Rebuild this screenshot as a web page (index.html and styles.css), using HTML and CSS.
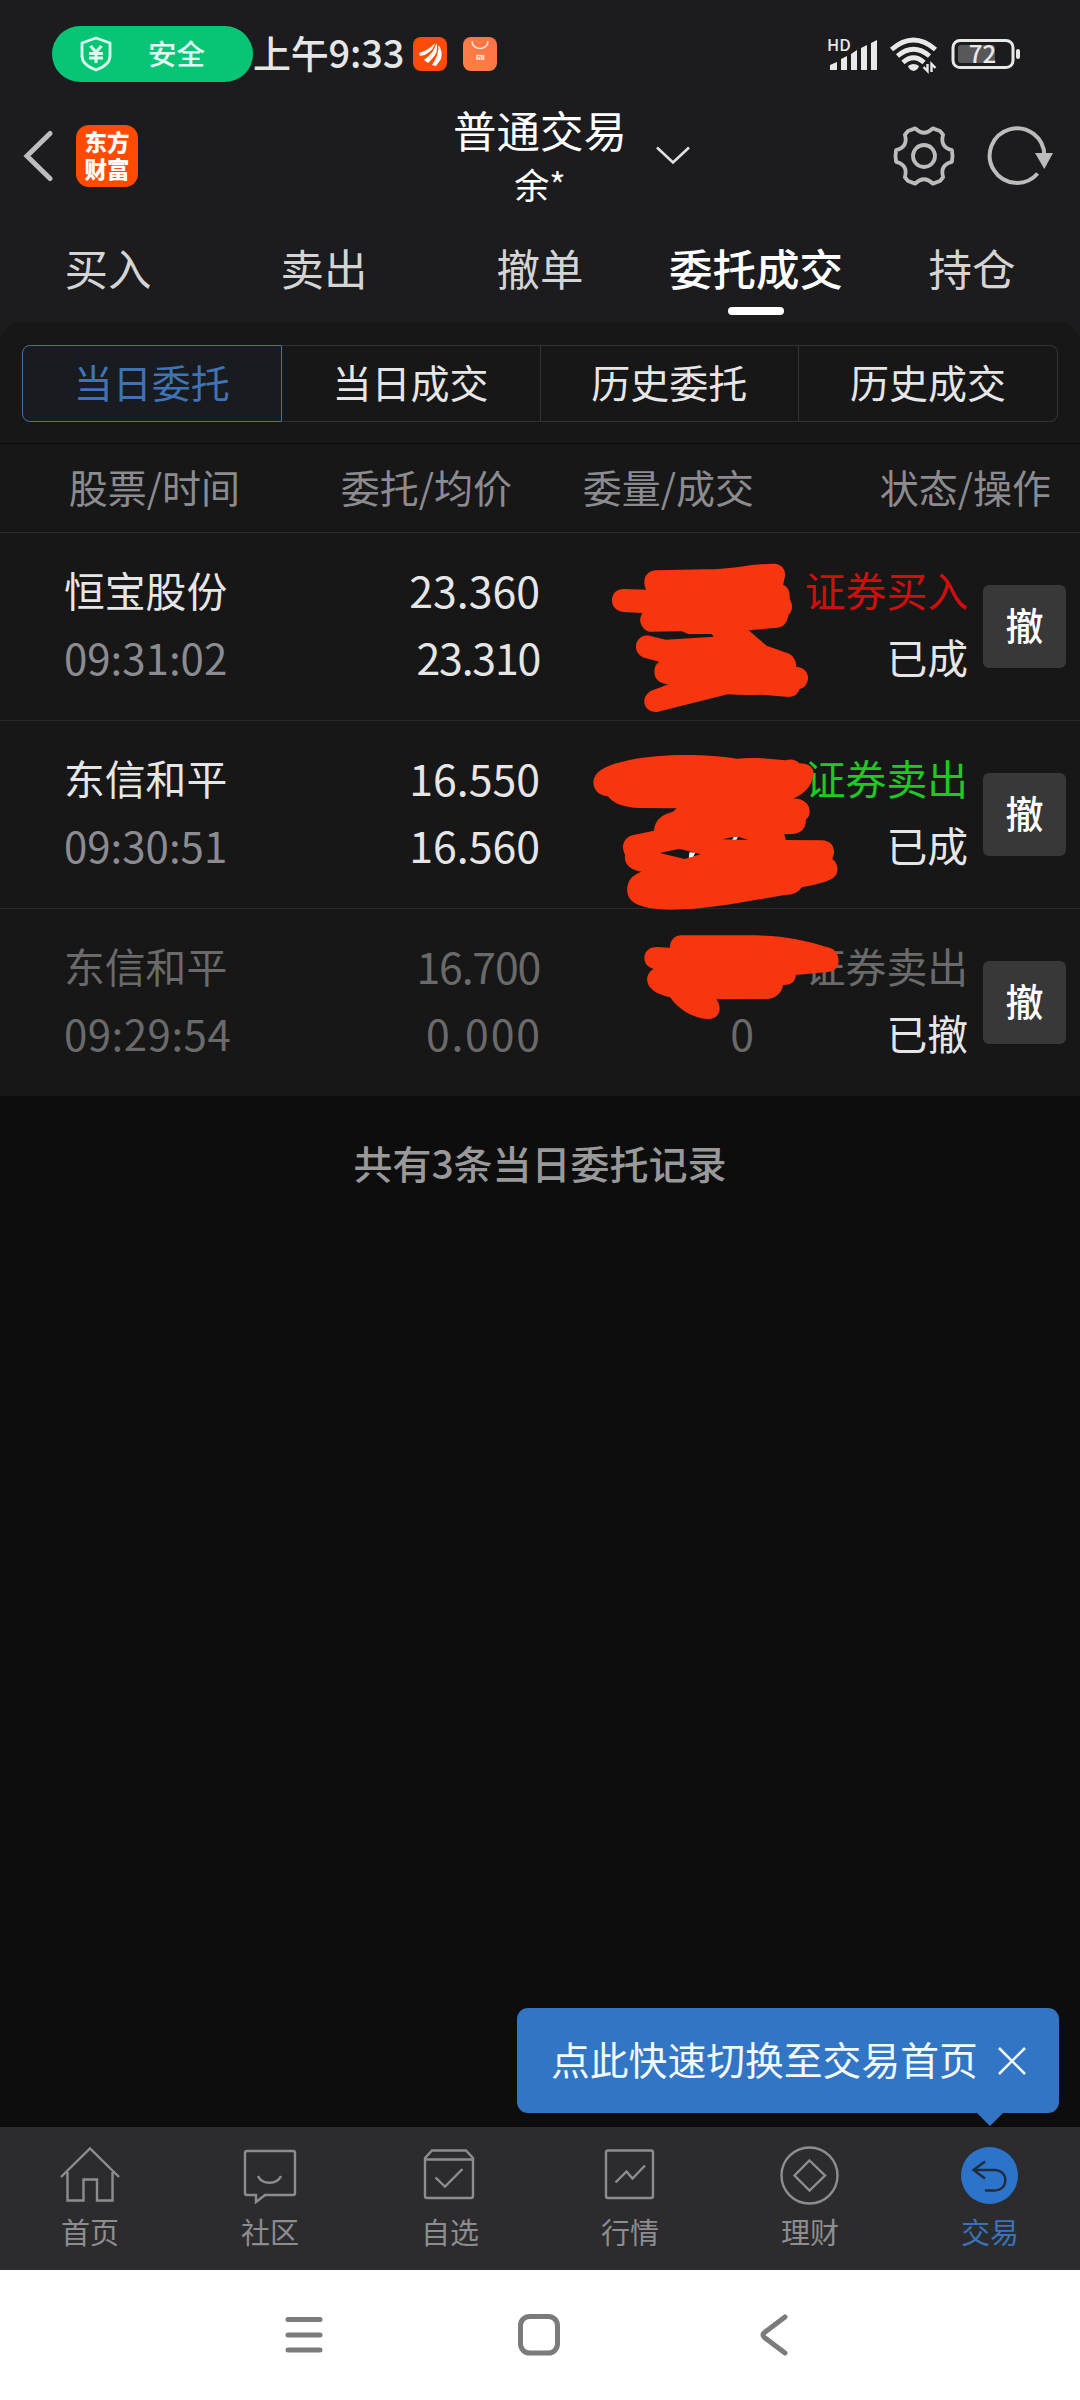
FILE: index.html
```html
<!DOCTYPE html>
<html lang="zh-CN">
<head>
<meta charset="utf-8">
<title>普通交易</title>
<link rel="stylesheet" href="styles.css">
</head>
<body>
<div class="screen">
  <div class="status-bar">
    <div class="safe-pill">
      <svg class="shield" width="32" height="36" viewBox="0 0 32 36" fill="none" stroke="#d9fff0" stroke-width="2.800" stroke-linejoin="round"><path d="M16 2 L30 7 V20 C30 27 24 31 16 34 C8 31 2 27 2 20 V7 Z"/><path d="M10.500 10 L16 16 L21.500 10 M9 17.500 H23 M9 22 H23 M16 16 V27" stroke-width="3"/></svg>
      <span>安全</span>
    </div>
    <span class="clock">上午9:33</span>
    <svg class="app-icon" width="34" height="34" viewBox="0 0 34 34"><rect width="34" height="34" rx="8" fill="#ff4b0a"/><g fill="#fff"><path d="M6 16 Q16 13 22 6 Q21 12 15 16 Q11 19 7 19 Z"/><path d="M11 23 Q21 16 23.500 6 Q26 15 19 22 L15 26 Z"/><path d="M19 28 Q26 18 25.500 8 Q30 14 28 22 L23 29 Z"/></g></svg>
    <svg class="app-icon second" width="34" height="34" viewBox="0 0 34 34"><defs><linearGradient id="bag" x1="0" y1="1" x2="1" y2="0"><stop offset="0" stop-color="#ff8142"/><stop offset="1" stop-color="#ff7048"/></linearGradient></defs><rect width="34" height="34" rx="8" fill="url(#bag)"/><g fill="none" stroke="#ffe4d4" stroke-width="1.600"><path d="M9 4 C9 14 25 14 25 4"/><path d="M14 23 V18.500 H18.500 V23 M16.300 20 V23 M20.500 18 V23"/></g></svg>
    <div class="signals">
      <svg width="196" height="60" viewBox="0 -12 196 60">
        <text x="0" y="15" class="hd">HD</text>
        <g fill="#e8e8e8"><path d="M3 34 V29 L10 26 V34 Z M14 34 V23 L20 20 V34 Z M24 34 V18 L30 14 V34 Z M34 34 V12 L40 9 V34 Z M44 34 V7 L50 4 V34 Z"/>
        <path d="M81 30 Q86.500 26 92 30 Q91 34 86.500 35 Q82 34 81 30 Z"/></g>
        <g fill="none" stroke="#e8e8e8" stroke-width="4.800"><path d="M64.500 13.500 Q86.500 -5.500 108.500 13.500"/><path d="M70.500 20 Q86.500 6.500 102.500 20"/><path d="M76 26.500 Q86.500 17 97 26.500"/></g>
        <path d="M100.500 28 V35 L96.500 31 M104.500 36 V28 L108.500 32" fill="none" stroke="#e8e8e8" stroke-width="2.400"/>
        <rect x="126" y="4.500" width="60" height="27" rx="7" fill="none" stroke="#e8e8e8" stroke-width="3"/>
        <rect x="131" y="9" width="37" height="18" rx="3" fill="#58585a"/>
        <rect x="189" y="13" width="4" height="10" rx="2" fill="#e8e8e8"/>
        <text x="155.500" y="27" text-anchor="middle" class="level">72</text>
      </svg>
    </div>
  </div>

  <header class="nav">
    <div class="nav-left">
      <svg width="30" height="52" viewBox="0 0 30 52" fill="none" stroke="#bdbdbd" stroke-width="5" stroke-linecap="round"><path d="M27 3.500 L4 26 L27 48.500"/></svg>
      <div class="brand">东方<br>财富</div>
    </div>
    <div class="title"><span class="title-main">普通交易</span><span class="title-sub">余*</span></div>
    <div class="nav-right">
      <svg class="drop" width="36" height="20" viewBox="0 0 36 20" fill="none" stroke="#e0e0e0" stroke-width="2.600"><path d="M2 1.500 L18 16.500 L34 1.500"/></svg>
      <svg class="gear" width="64" height="64" viewBox="-32 -32 64 64" fill="none" stroke="#bcbcbc" stroke-width="3.800" stroke-linejoin="round"><path d="M27.900 5.900 Q15.600 9 19.100 21.200 L16 25 L8.800 27.600 Q0 19 -8.800 27.600 L-16 25 L-19.100 21.200 Q-15.600 9 -27.900 5.900 L-28.500 0 L-27.900 -5.900 Q-15.600 -9 -19.100 -21.200 L-16 -25 L-8.800 -27.600 Q0 -19 8.800 -27.600 L16 -25 L19.100 -21.200 Q15.600 -9 27.900 -5.900 L28.500 0 Z"/><circle r="11"/></svg>
      <svg class="refresh" width="68" height="64" viewBox="0 0 68 64"><path d="M50.600 49.500 A27.300 27.300 0 1 1 57.300 32" fill="none" stroke="#bcbcbc" stroke-width="4"/><path d="M48 29 H66 L57.300 45 Z" fill="#bcbcbc"/></svg>
    </div>
  </header>

  <nav class="tabs">
    <span>买入</span><span>卖出</span><span>撤单</span><span class="on">委托成交</span><span>持仓</span>
  </nav>

  <main class="panel">
    <div class="segments"><span class="on">当日委托</span><span>当日成交</span><span>历史委托</span><span>历史成交</span></div>
    <div class="cols"><span>股票/时间</span><span>委托/均价</span><span>委量/成交</span><span>状态/操作</span></div>

    <section class="row">
      <div class="name"><span>恒宝股份</span><span class="time">09:31:02</span></div>
      <div class="num"><span>23.360</span><span class="one">23.310</span></div>
      <div class="num"></div>
      <div class="state"><span class="buy">证券买入</span><span>已成</span></div>
      <button class="cancel">撤</button>
      <svg class="mask" viewBox="0 639 1568 564" preserveAspectRatio="none"><path fill="#f73610" d="M335 751 L480 748 C560 748 620 730 682 731 C706 733 716 755 710 775 L706 794 Q728 803 725 838 C736 855 733 875 721 886 C718 908 707 922 690 923 L606 931 L658 977 L715 998 C735 1003 744 1020 744 1040 C770 1043 780 1060 778 1078 C775 1097 765 1105 754 1107 Q747 1130 723 1131 L640 1124 Q590 1126 545 1123 L340 1176 C312 1177 301 1158 303 1138 C308 1117 325 1110 345 1104 L372 1093 C345 1089 332 1076 332 1055 C332 1040 337 1031 346 1025 L305 1014 C282 1008 275 985 280 970 C287 950 305 944 320 948 L366 959 L505 950 L498 942 L430 942 L412 934 L318 935 C298 932 289 908 291 895 L297 879 L243 876 C219 875 207 855 209 838 C211 817 225 807 243 807 L308 809 C295 778 308 754 335 751 Z"/></svg>
    </section>

    <section class="row">
      <div class="name"><span>东信和平</span><span class="time">09:30:51</span></div>
      <div class="num"><span>16.550</span><span>16.560</span></div>
      <div class="num"></div>
      <div class="state"><span class="sell">证券卖出</span><span>已成</span></div>
      <button class="cancel">撤</button>
      <svg class="mask" viewBox="0 63 1568 564" preserveAspectRatio="none"><path fill="#f73610" d="M155 245 C157 210 200 193 260 180 C350 161 480 161 570 176 C620 171 670 176 712 181 Q738 174 753 190 C786 190 798 207 794 228 C788 260 765 283 736 295 C770 297 784 315 783 337 Q782 351 772 359 C773 390 752 403 730 402 L709 403 L714 420 L818 421 C845 422 855 440 854 460 L849 477 C865 488 868 512 858 527 C842 546 800 553 760 562 Q745 586 710 585 C600 604 490 629 380 629 C290 627 254 609 253 570 C253 540 270 524 295 515 C258 510 243 489 247 464 C235 440 241 415 268 406 L331 392 C333 359 355 343 386 335 L397 325 L290 324 Q222 323 197 289 C167 285 155 267 155 245 Z"/><path fill="#171717" d="M348 459 L405 446 L466 463 L420 477 Z M530 418 L570 409 L605 420 Z"/><path fill="#eee" d="M434 457 L451 458 L445 470 L432 473 Z M563 410 L575 410 L570 419 L558 419 Z"/></svg>
    </section>

    <section class="row void">
      <div class="name"><span>东信和平</span><span class="time wide">09:29:54</span></div>
      <div class="num"><span class="one">16.700</span><span class="zeros">0.000</span></div>
      <div class="num"><span class="blank"></span><span>0</span></div>
      <div class="state"><span class="off">证券卖出</span><span>已撤</span></div>
      <button class="cancel">撤</button>
      <svg class="mask" viewBox="0 627 1568 564" preserveAspectRatio="none"><path fill="#f73610" d="M410 706 L610 706 C700 706 765 719 835 742 C858 746 868 765 867 786 C865 808 850 815 835 816 L743 825 C741 847 728 855 706 855 C701 881 685 896 655 897 L512 898 C528 918 526 956 490 957 C445 957 397 924 378 892 C335 883 311 863 311 838 C312 821 321 812 330 807 C308 800 303 786 303 771 C306 750 320 741 340 741 L377 743 C378 720 390 707 410 706 Z"/></svg>
    </section>
  </main>

  <div class="rest">
    <p class="total">共有3条当日委托记录</p>
    <div class="tip"><span>点此快速切换至交易首页</span><svg width="30" height="30" viewBox="0 0 30 30" stroke="#eef6ff" stroke-width="2.600"><path d="M2 2 L28 28 M28 2 L2 28"/></svg></div>
  </div>

  <nav class="dock">
    <div><svg width="64" height="64" viewBox="0 0 64 64"><path d="M3 33 L32 4.500 L61 33 M9.500 28 V56.500 H25.500 V35.500 H39 V56.500 H54.500 V28"/></svg><span>首页</span></div>
    <div><svg width="64" height="64" viewBox="0 0 64 64"><path d="M9 7 H55 Q57 7 57 9 V49 Q57 51 55 51 H27 L18 58 V51 H9 Q7 51 7 49 V9 Q7 7 9 7 Z"/><path d="M20 32 C24 41 39 41 43 32"/></svg><span>社区</span></div>
    <div><svg width="64" height="64" viewBox="0 0 64 64"><path d="M14 6.500 H48 L55 14 V52 Q55 54 53 54 H9 Q7 54 7 52 V14 Z M7 15.500 H55"/><path d="M17.500 33.500 L27 42.500 L44.500 25"/></svg><span>自选</span></div>
    <div><svg width="64" height="64" viewBox="0 0 64 64"><rect x="8" y="6.500" width="47" height="47.500" rx="2"/><path d="M17.500 38.500 L28.500 27.500 L34.500 34.500 L47 21.500"/></svg><span>行情</span></div>
    <div><svg width="64" height="64" viewBox="0 0 64 64"><circle cx="31.500" cy="31.500" r="28"/><path d="M31.500 16.500 L47 31.500 L31.500 46.500 L16.500 31.500 Z"/></svg><span>理财</span></div>
    <div class="on"><svg width="64" height="64" viewBox="0 0 64 64"><circle cx="31.500" cy="31.500" r="28.500" fill="#2b74ca" stroke="none"/><path d="M27 17.500 L15.500 26 L27 34.500 M16 26 H36.500 C51 26 51 46.500 36.500 46.500 H27" stroke="#202c3c"/></svg><span>交易</span></div>
  </nav>

  <div class="system">
    <svg width="44" height="44" viewBox="0 0 44 44"><path d="M6 6.500 H38 M6 22 H38 M6 37 H38"/></svg>
    <svg width="44" height="44" viewBox="0 0 44 44"><rect x="3.500" y="3.500" width="37" height="36.500" rx="9"/></svg>
    <svg width="44" height="44" viewBox="0 0 44 44"><path d="M33 4 L12.500 19.500 Q9.500 22 12.500 24.500 L33 40"/></svg>
  </div>
</div>
</body>
</html>
```
FILE: styles.css
```css
* { box-sizing: border-box; }
body { margin: 0; background: #0d0d0d; font-family: "Noto Sans CJK SC", sans-serif; color: #e6e6e6; }
svg { display: block; flex: none; }
.screen { width: 1080px; height: 2400px; display: flex; flex-direction: column; background: #1c1c1e; overflow: hidden; }

.status-bar { height: 108px; display: flex; align-items: center; padding: 0 57px 0 52px; flex: none; }
.safe-pill { width: 201px; height: 56px; border-radius: 28px; background: #08c576; display: flex; align-items: center; padding-left: 28px; gap: 36px; font-size: 28.500px; line-height: 56px; font-weight: 500; color: #e4fff5; white-space: nowrap; }
.safe-pill span { margin-top: -3px; }
.clock { width: 160px; margin-top: -4px; font-size: 38px; font-weight: 500; letter-spacing: -0.2px; line-height: 56px; white-space: nowrap; }
.app-icon.second { margin-left: 16px; }
.signals { margin-left: auto; }
.hd { font: 500 16.500px "Noto Sans CJK SC", sans-serif; fill: #e8e8e8; }
.level { font: 500 24px "Noto Sans CJK SC", sans-serif; fill: #e8e8e8; }

.nav { height: 96px; flex: none; display: grid; grid-template-columns: 1fr 176px 1fr; }
.nav-left { display: flex; align-items: center; padding: 0 0 5px 23px; gap: 23px; }
.brand { width: 62px; height: 62px; border-radius: 13px; background: #ff4a04; text-align: center; font-size: 22.500px; font-weight: 900; line-height: 27px; color: #fff; padding-top: 3px; }
.title { display: flex; flex-direction: column; align-items: center; color: #fff; white-space: nowrap; }
.title-main { font-size: 43.500px; line-height: 52px; margin-top: -4px; }
.title-sub { font-size: 35px; line-height: 50px; margin-top: 3px; }
.nav-right { display: flex; align-items: center; padding: 0 0 6px 27px; }
.gear { margin-left: 201px; }
.refresh { margin-left: 31px; }

.tabs { height: 119px; flex: none; display: grid; grid-template-columns: repeat(5, 1fr); text-align: center; font-size: 43.500px; line-height: 128px; color: #d4d4d4; white-space: nowrap; }
.tabs .on { color: #fff; font-weight: 500; display: flex; flex-direction: column; align-items: center; }
.tabs .on::after { content: ""; width: 56px; height: 8px; border-radius: 4px; background: #fff; margin-top: -25px; }

.panel { background: #171717; border-radius: 20px 20px 0 0; padding-top: 22px; flex: none; }
.segments { display: flex; margin: 0 22px 21px; height: 77px; font-size: 39px; line-height: 70px; text-align: center; }
.segments span { flex: 1; border: 1px solid #333; border-left-width: 0; }
.segments span:last-child { border-radius: 0 8px 8px 0; }
.segments .on { border: 1px solid #47729f; border-radius: 8px 0 0 8px; background: #181b20; color: #3e74b6; }
.cols { height: 90px; border-top: 1px solid #0b0b0b; border-bottom: 1px solid #2b2b2b; display: grid; grid-template-columns: 240px 272px 242px 297px; text-align: right; font-size: 39px; line-height: 84px; color: #8b8b90; }
.row { position: relative; height: 188px; padding-top: 23px; border-bottom: 1px solid #2a2a2a; display: grid; grid-template-columns: 270px 270px 214px 214px 83px; font-size: 40.800px; line-height: 67px; }
.row:last-child { border-bottom: 0; height: 187px; }
.row span { display: block; white-space: nowrap; }
.name { padding-left: 64px; }
.name .time { color: #8b8b90; font-size: 42px; }
.name .wide { letter-spacing: 0.500px; }
.num { font-size: 42.800px; text-align: right; }
.num .one { letter-spacing: -1.200px; }
.num .zeros { letter-spacing: 1.800px; margin-right: -1.800px; }
.blank { height: 67px; }
.state { text-align: right; }
.state .buy { color: #cf0f0f; }
.state .sell { color: #1fc822; }
.void .name, .void .num, .void .time, .void .off { color: #6a6a6a; }
.cancel { margin: 29px 0 0 15px; width: 83px; height: 83px; border: 0; border-radius: 6px; background: #383838; color: #fff; font: 500 38px/76px "Noto Sans CJK SC", sans-serif; padding: 0 0 5px; }
.mask { position: absolute; left: 540px; top: 0; width: 540px; height: 188px; overflow: visible; z-index: 1; }

.rest { flex: 1; background: #0d0d0d; display: flex; flex-direction: column; justify-content: space-between; padding: 38px 21px 14px; }
.total { margin: 0; text-align: center; font-size: 39px; line-height: 56px; font-weight: 500; color: #999; }
.tip { position: relative; align-self: flex-end; width: 542px; height: 105px; border-radius: 11px; background: #3275c4; color: #f2f9ff; display: flex; align-items: center; padding-left: 34px; gap: 19px; font-size: 38.800px; line-height: 96px; white-space: nowrap; }
.tip span { margin-top: -5px; }
.tip::after { content: ""; position: absolute; left: 459px; top: 104px; border: 14px solid transparent; border-top-color: #3275c4; border-bottom: 0; }

.dock { height: 143px; flex: none; background: #2c2c2e; display: grid; grid-template-columns: repeat(6, 1fr); padding-top: 17px; color: #8d8d90; font-size: 29px; line-height: 40px; }
.dock div { display: flex; flex-direction: column; align-items: center; gap: 3px; }
.dock svg { fill: none; stroke: #8d8d90; stroke-width: 2.400; }
.dock .on { color: #3974b9; }
.system { height: 130px; flex: none; background: #fff; display: flex; justify-content: center; gap: 191px; padding: 43px 2px 0 0; }
.system svg { fill: none; stroke: #7b7b7b; stroke-width: 5; stroke-linecap: round; }
```
